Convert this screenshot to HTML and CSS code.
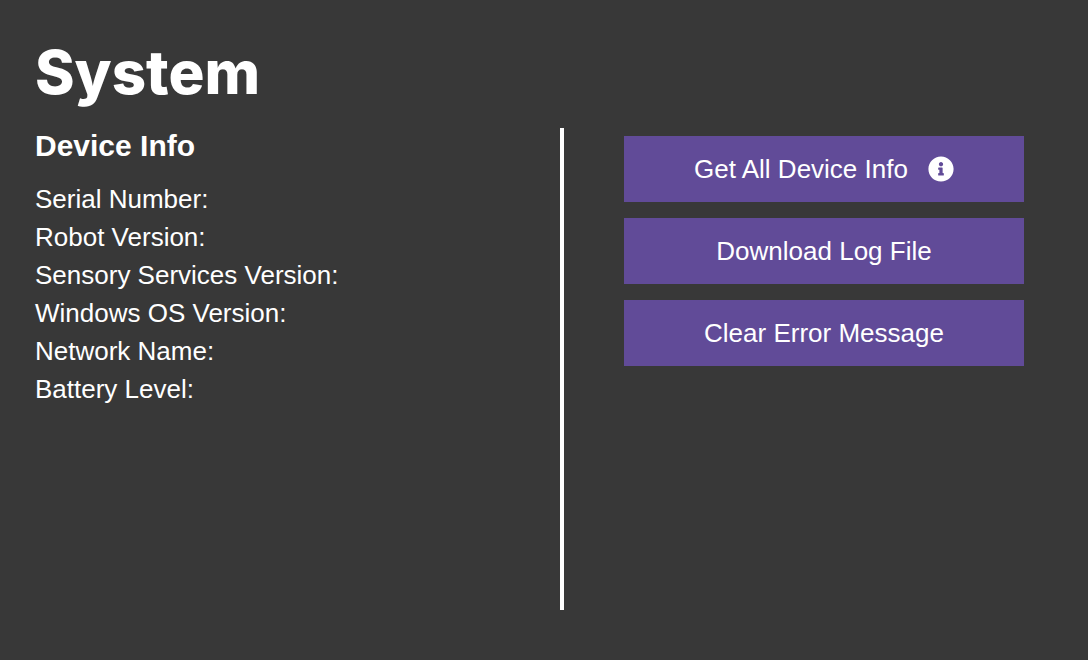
FILE: index.html
```html
<!DOCTYPE html>
<html lang="en">
<head>
<meta charset="utf-8">
<title>System</title>
<link rel="stylesheet" href="styles.css">
</head>
<body>
<main class="page">
  <h1 class="title">System</h1>
  <div class="columns">
    <section class="info">
      <h2 class="subtitle">Device Info</h2>
      <ul class="fields">
        <li>Serial Number:</li>
        <li>Robot Version:</li>
        <li>Sensory Services Version:</li>
        <li>Windows OS Version:</li>
        <li>Network Name:</li>
        <li>Battery Level:</li>
      </ul>
    </section>
    <section class="actions">
      <button class="action" type="button">Get All Device Info
        <svg class="icon" viewBox="0 0 512 512" aria-hidden="true"><path fill="currentColor" d="M256 8C119 8 8 119 8 256s111 248 248 248 248-111 248-248S393 8 256 8zm0 110c23 0 42 19 42 42s-19 42-42 42-42-19-42-42 19-42 42-42zm56 254c0 7-5 12-12 12h-88c-7 0-12-5-12-12v-24c0-7 5-12 12-12h12v-64h-12c-7 0-12-5-12-12v-24c0-7 5-12 12-12h64c7 0 12 5 12 12v100h12c7 0 12 5 12 12v24z"/></svg>
      </button>
      <button class="action" type="button">Download Log File</button>
      <button class="action" type="button">Clear Error Message</button>
    </section>
  </div>
</main>
</body>
</html>
```
FILE: styles.css
```css
* {
  box-sizing: border-box;
}

body {
  margin: 0;
  background: #383838;
  color: #fff;
  font-family: "Liberation Sans", Arial, sans-serif;
  font-size: 26px;
}

.page {
  display: flex;
  flex-direction: column;
  min-height: 100vh;
  padding: 32px 64px 50px 35px;
}

.title {
  margin: 0;
  font-family: Inter, sans-serif;
  font-size: 60px;
  font-weight: 800;
  line-height: 80px;
}

.columns {
  display: grid;
  grid-template-columns: 529fr 460fr;
  flex: 1;
  margin-top: 16px;
}

.info {
  border-right: 4px solid #fff;
}

.subtitle {
  margin: 0;
  font-size: 30px;
  line-height: 36px;
}

.fields {
  margin: 16px 0 0;
  padding: 0;
  list-style: none;
  line-height: 38px;
}

.actions {
  display: flex;
  flex-direction: column;
  gap: 16px;
  padding: 8px 0 0 60px;
}

.action {
  display: flex;
  align-items: center;
  justify-content: center;
  gap: 20px;
  height: 66px;
  border: 0;
  background: #614b98;
  color: inherit;
  font: inherit;
  cursor: pointer;
}

.icon {
  width: 26px;
  height: 26px;
}
```
